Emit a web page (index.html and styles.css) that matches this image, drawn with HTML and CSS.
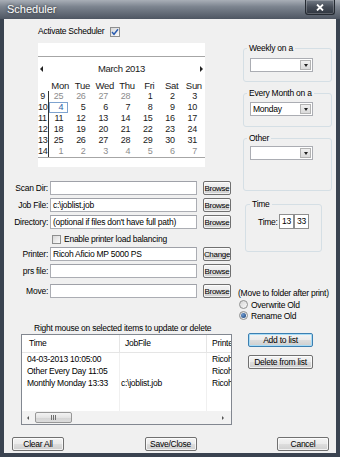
FILE: index.html
```html
<!DOCTYPE html>
<html lang="en">
<head>
  <meta charset="UTF-8" />
  <title>Scheduler</title>
  <link rel="stylesheet" href="styles.css">
</head>
<body>
  <div class="window">
    <div class="titlebar">
      <span class="title">Scheduler</span>
      <span class="close-btn">
        <svg width="8" height="7" viewBox="0 0 8 7"><path d="M1 0.5 L7 6.5 M7 0.5 L1 6.5" stroke="#fff" stroke-width="1.8" /></svg>
      </span>
    </div>

    <div class="client">
      <div class="main">
        <!-- left side: calendar, paths, job list -->
        <div class="left-col">
          <div class="activate">
            Activate Scheduler
            <span class="check">
              <svg width="8" height="8" viewBox="0 0 8 8"><path d="M1 4 L3 6.3 L7 1.2" fill="none" stroke="#2a5cb0" stroke-width="1.4" /></svg>
            </span>
          </div>

          <div class="calendar">
            <div class="cal-top"></div>
            <div class="cal-head">
              <span class="arrow-left"></span>
              <span class="month">March 2013</span>
              <span class="arrow-right"></span>
            </div>
            <div class="cal-grid">
              <span></span><span class="dow">Mon</span><span class="dow">Tue</span><span class="dow">Wed</span><span class="dow">Thu</span><span class="dow">Fri</span><span class="dow">Sat</span><span class="dow">Sun</span>

              <span class="wk">9</span><span class="d gray">25</span><span class="d gray">26</span><span class="d gray">27</span><span class="d gray">28</span><span class="d">1</span><span class="d">2</span><span class="d">3</span>
              <span class="wk">10</span><span class="d sel">4</span><span class="d">5</span><span class="d">6</span><span class="d">7</span><span class="d">8</span><span class="d">9</span><span class="d">10</span>
              <span class="wk">11</span><span class="d">11</span><span class="d">12</span><span class="d">13</span><span class="d">14</span><span class="d">15</span><span class="d">16</span><span class="d">17</span>
              <span class="wk">12</span><span class="d">18</span><span class="d">19</span><span class="d">20</span><span class="d">21</span><span class="d">22</span><span class="d">23</span><span class="d">24</span>
              <span class="wk">13</span><span class="d">25</span><span class="d">26</span><span class="d">27</span><span class="d">28</span><span class="d">29</span><span class="d">30</span><span class="d">31</span>
              <span class="wk">14</span><span class="d gray">1</span><span class="d gray">2</span><span class="d gray">3</span><span class="d gray">4</span><span class="d gray">5</span><span class="d gray">6</span><span class="d gray">7</span>
            </div>
          </div>

          <div class="form">
            <div class="row">
              <span class="lbl">Scan Dir:</span>
              <span class="field"></span>
              <span class="btn small">Browse</span>
            </div>
            <div class="row">
              <span class="lbl">Job File:</span>
              <span class="field">c:\joblist.job</span>
              <span class="btn small">Browse</span>
            </div>
            <div class="row">
              <span class="lbl">Directory:</span>
              <span class="field">(optional if files don't have full path)</span>
              <span class="btn small">Browse</span>
            </div>
            <div class="row cb-row">
              <span class="box"></span>
              <span class="cb-text">Enable printer load balancing</span>
            </div>
            <div class="row">
              <span class="lbl">Printer:</span>
              <span class="field">Ricoh Aficio MP 5000 PS</span>
              <span class="btn small">Change</span>
            </div>
            <div class="row">
              <span class="lbl">prs file:</span>
              <span class="field"></span>
              <span class="btn small">Browse</span>
            </div>
            <div class="row move-row">
              <span class="lbl">Move:</span>
              <span class="field"></span>
              <span class="btn small">Browse</span>
            </div>
          </div>

          <div class="list-label">Right mouse on selected items to update or delete</div>

          <div class="list">
            <div class="list-head">
              <span class="hc c1">Time</span>
              <span class="hc c2">JobFile</span>
              <span class="hc c3">Printe</span>
            </div>
            <div class="list-body">
              <div class="col c1">
                <span class="cell">04-03-2013 10:05:00</span>
                <span class="cell">Other Every Day 11:05</span>
                <span class="cell">Monthly Monday 13:33</span>
              </div>
              <div class="col c2">
                <span class="cell"></span>
                <span class="cell"></span>
                <span class="cell">c:\joblist.job</span>
              </div>
              <div class="col c3">
                <span class="cell">Ricoh</span>
                <span class="cell">Ricoh</span>
                <span class="cell">Ricoh</span>
              </div>
            </div>
            <div class="hscroll">
              <span class="sb-arrow"><span class="tri-left"></span></span>
              <span class="thumb"><span class="grip"></span></span>
              <span class="track"></span>
              <span class="sb-arrow right"><span class="tri-right"></span></span>
            </div>
          </div>
        </div>

        <!-- right side: repeat options, time, move options -->
        <div class="right-col">
          <fieldset class="group g1">
            <legend>Weekly on a</legend>
            <div class="combo"><span class="combo-text"></span><span class="combo-btn"><span class="tri-down"></span></span></div>
          </fieldset>

          <fieldset class="group g2">
            <legend>Every Month on a</legend>
            <div class="combo"><span class="combo-text">Monday</span><span class="combo-btn"><span class="tri-down"></span></span></div>
          </fieldset>

          <fieldset class="group g3">
            <legend>Other</legend>
            <div class="combo"><span class="combo-text"></span><span class="combo-btn"><span class="tri-down"></span></span></div>
          </fieldset>

          <fieldset class="group time-group">
            <legend>Time</legend>
            <div class="time-row">
              <span class="time-lbl">Time:</span>
              <span class="time-box">13</span>
              <span class="time-box">33</span>
            </div>
          </fieldset>

          <div class="move-note">(Move to folder after print)</div>
          <div class="radio-row"><span class="radio"></span>Overwrite Old</div>
          <div class="radio-row"><span class="radio on"></span>Rename Old</div>

          <span class="btn side default">Add to list</span>
          <span class="btn side delete">Delete from list</span>
        </div>
      </div>

      <div class="bottom-bar">
        <span class="btn wide">Clear All</span>
        <span class="btn wide">Save/Close</span>
        <span class="btn wide">Cancel</span>
      </div>
    </div>
  </div>
</body>
</html>
```

FILE: styles.css
```css
* {
  margin: 0;
  padding: 0;
  box-sizing: border-box;
}

body {
  background: #fff;
  font-family: "Liberation Sans", Arial, sans-serif;
  font-size: 8.5px;
  letter-spacing: -0.25px;
  color: #000;
}

.window {
  width: 340px;
  height: 457px;
  display: flex;
  flex-direction: column;
  background: #3a4350;
}

/* Title bar */
.titlebar {
  height: 19px;
  display: flex;
  align-items: flex-start;
  justify-content: space-between;
  background: linear-gradient(to bottom, #a9afb7 0%, #7c848f 35%, #4e5662 100%);
}

.title {
  font-size: 11px;
  letter-spacing: 0;
  line-height: 19px;
  color: #fff;
  padding-left: 7px;
  text-shadow: 0 0 3px rgba(0, 0, 0, 0.7);
}

.close-btn {
  width: 30px;
  height: 15px;
  margin-right: 5px;
  display: flex;
  align-items: center;
  justify-content: center;
  background: linear-gradient(to bottom, #737b86, #454c57 50%, #2f3640);
  border: 1px solid #242a32;
  border-top: 0;
  border-radius: 0 0 3px 3px;
  box-shadow: inset 0 0 0 1px rgba(255, 255, 255, 0.22);
}

.client {
  margin: 0 4px 4px;
  height: 434px;
  background: #f0f0f0;
  display: flex;
  flex-direction: column;
}

.main {
  display: flex;
  height: 406px;
}

.left-col {
  width: 232px;
  display: flex;
  flex-direction: column;
}

.right-col {
  width: 100px;
  display: flex;
  flex-direction: column;
}

/* Activate checkbox */
.activate {
  margin-top: 7px;
  height: 11px;
  line-height: 11px;
  padding-left: 34px;
  display: flex;
  align-items: center;
}

.check,
.box {
  width: 10px;
  height: 10px;
  border: 1px solid #8e8f8f;
  background: linear-gradient(135deg, #d8d8d8, #fbfbfb);
  display: flex;
  align-items: center;
  justify-content: center;
  flex-shrink: 0;
}

.check {
  margin-left: 6px;
}

/* Calendar */
.calendar {
  margin: 6px 0 0 34px;
  width: 167px;
  height: 124px;
  background: #fff;
  font-size: 9px;
  letter-spacing: -0.3px;
  color: #1a1a1a;
}

.cal-top {
  height: 14px;
  border-bottom: 1px solid #a6a6a6;
}

.cal-head {
  height: 23px;
  padding: 0 2px;
  display: flex;
  align-items: center;
  justify-content: space-between;
}

.month {
  font-size: 9.5px;
}

.arrow-left,
.arrow-right {
  width: 0;
  height: 0;
  border-top: 3px solid transparent;
  border-bottom: 3px solid transparent;
}

.arrow-left {
  border-right: 3px solid #222;
}

.arrow-right {
  border-left: 3px solid #222;
}

.cal-grid {
  display: grid;
  grid-template-columns: 11px repeat(7, 1fr);
  grid-auto-rows: 11px;
  line-height: 11px;
  border-bottom: 1px solid #a6a6a6;
}

.dow {
  text-align: center;
  font-size: 9.5px;
}

.wk {
  text-align: right;
  padding-right: 3px;
  border-right: 1px solid #333;
}

.d {
  text-align: right;
  padding-right: 8px;
}

.d.gray {
  color: #8c8c8c;
}

.d.sel {
  margin-right: 3px;
  padding-right: 4px;
  line-height: 9px;
  border: 1px solid #7ea3cf;
  color: #2d5ea6;
}

/* Path fields */
.form {
  margin-top: 14px;
  display: flex;
  flex-direction: column;
}

.row {
  height: 14px;
  margin-bottom: 3px;
  display: flex;
  align-items: center;
}

.lbl {
  width: 44px;
  text-align: right;
  flex-shrink: 0;
  white-space: nowrap;
}

.field {
  margin-left: 2px;
  width: 147px;
  height: 14px;
  line-height: 12px;
  padding-left: 2px;
  border: 1px solid #abadb3;
  border-top-color: #9fa1a8;
  background: #fff;
  white-space: nowrap;
  overflow: hidden;
}

.cb-row {
  margin-bottom: 1px;
  padding-left: 48px;
}

.box {
  width: 9px;
  height: 9px;
}

.cb-text {
  margin-left: 3px;
}

.move-row {
  margin-top: 3px;
}

/* Buttons */
.btn {
  display: flex;
  align-items: center;
  justify-content: center;
  height: 14px;
  border: 1px solid #707070;
  border-radius: 2px;
  background: linear-gradient(to bottom, #f3f3f3 0%, #ebebeb 48%, #dddddd 52%, #cfcfcf 100%);
  box-shadow: inset 0 0 0 1px rgba(255, 255, 255, 0.7);
  white-space: nowrap;
  overflow: hidden;
  flex-shrink: 0;
}

.btn.small {
  margin-left: 6px;
  width: 28px;
  font-size: 8px;
  letter-spacing: -0.3px;
}

.btn.side {
  margin-left: 12px;
  width: 65px;
}

.btn.default {
  margin-top: 12px;
  border-color: #3c7fb1;
  box-shadow: inset 0 0 0 1px #a8dcf6;
}

.btn.delete {
  margin-top: 8px;
}

.btn.wide {
  width: 52px;
}

/* Job list */
.list-label {
  margin-top: 21px;
  padding-left: 30px;
  height: 12px;
  line-height: 12px;
  white-space: nowrap;
}

.list {
  margin-left: 17px;
  width: 211px;
  height: 91px;
  border: 1px solid #828790;
  background: #fff;
  display: flex;
  flex-direction: column;
  overflow: hidden;
}

.list-head {
  height: 18px;
  display: flex;
  border-bottom: 1px solid #e5e5e5;
  flex-shrink: 0;
}

.hc {
  line-height: 16px;
  white-space: nowrap;
  border-right: 1px solid #e5e5e5;
  flex-shrink: 0;
  overflow: hidden;
}

.c1 {
  width: 98px;
}

.c2 {
  width: 87px;
}

.c3 {
  width: 40px;
}

.hc.c1 {
  padding-left: 7px;
}

.hc.c2,
.hc.c3 {
  padding-left: 5px;
}

.list-body {
  flex: 1;
  display: flex;
}

.col {
  display: flex;
  flex-direction: column;
  flex-shrink: 0;
  border-right: 1px solid #f0f0f0;
}

.cell {
  height: 12px;
  line-height: 12px;
  white-space: nowrap;
  overflow: hidden;
}

.col.c1 .cell {
  padding-left: 5px;
}

.col.c2 .cell {
  padding-left: 1px;
}

.col.c3 .cell {
  padding-left: 5px;
}

.hscroll {
  height: 13px;
  display: flex;
  align-items: center;
  background: #f2f2f2;
  flex-shrink: 0;
}

.sb-arrow {
  width: 11px;
  height: 13px;
  display: flex;
  align-items: center;
  justify-content: center;
}

.sb-arrow.right {
  width: 16px;
}

.tri-left,
.tri-right {
  width: 0;
  height: 0;
  border-top: 2px solid transparent;
  border-bottom: 2px solid transparent;
}

.tri-left {
  border-right: 2px solid #555;
}

.tri-right {
  border-left: 2px solid #555;
}

.thumb {
  margin-left: 2px;
  width: 37px;
  height: 11px;
  border: 1px solid #979797;
  border-radius: 2px;
  background: linear-gradient(to bottom, #f3f3f3, #e4e4e4 50%, #d4d4d4 51%, #dcdcdc);
  display: flex;
  align-items: center;
  justify-content: center;
}

.grip {
  width: 5px;
  height: 5px;
  background: repeating-linear-gradient(to right, #6f6f6f 0 1px, transparent 1px 2px);
}

.track {
  flex: 1;
}

/* Group boxes */
.group {
  border: 1px solid #d5dfe5;
  border-radius: 3px;
  margin-left: 7px;
  width: 89px;
  padding: 0;
  min-width: 0;
}

.group legend {
  margin-left: 3px;
  padding: 0 2px;
  line-height: 10px;
  white-space: nowrap;
}

.g1 {
  margin-top: 24px;
  padding-bottom: 9px;
}

.g1 .combo {
  margin-top: 5px;
}

.g2 {
  margin-top: 6px;
  padding-bottom: 10px;
}

.g2 .combo {
  margin-top: 4px;
}

.g3 {
  margin-top: 6px;
  padding-bottom: 30px;
}

.g3 .combo {
  margin-top: 3px;
}

.combo {
  margin-left: 6px;
  width: 63px;
  height: 14px;
  border: 1px solid #abadb3;
  background: #fff;
  display: flex;
}

.combo-text {
  flex: 1;
  padding-left: 2px;
  line-height: 12px;
}

.combo-btn {
  width: 11px;
  margin: 1px;
  border: 1px solid #b3b3b3;
  background: linear-gradient(to bottom, #f0f0f0, #dadada);
  display: flex;
  align-items: center;
  justify-content: center;
}

.tri-down {
  width: 0;
  height: 0;
  border-left: 2.5px solid transparent;
  border-right: 2.5px solid transparent;
  border-top: 3px solid #222;
}

.time-group {
  margin-top: 8px;
  margin-left: 9px;
  width: 77px;
  padding-bottom: 22px;
}

.time-group legend {
  margin-left: 4px;
}

.time-row {
  margin-top: 5px;
  padding-left: 12px;
  height: 15px;
  display: flex;
  align-items: center;
}

.time-lbl {
  width: 21px;
}

.time-box {
  width: 15px;
  height: 15px;
  line-height: 13px;
  text-align: center;
  border: 1px solid #8e8e8e;
  background: #fff;
}

/* Move options */
.move-note {
  margin-top: 36px;
  padding-left: 2px;
  line-height: 11px;
  white-space: nowrap;
}

.radio-row {
  height: 11px;
  padding-left: 3px;
  display: flex;
  align-items: center;
}

.radio {
  width: 9px;
  height: 9px;
  margin-right: 3px;
  border: 1px solid #8e8f8f;
  border-radius: 50%;
  background: linear-gradient(135deg, #d4d4d4, #fbfbfb);
  display: flex;
  align-items: center;
  justify-content: center;
}

.radio.on::after {
  content: "";
  width: 5px;
  height: 5px;
  border-radius: 50%;
  background: radial-gradient(circle at 35% 35%, #6d9bd3, #173d70);
}

/* Bottom buttons */
.bottom-bar {
  margin-top: 12px;
  padding: 0 7px 0 8px;
  display: flex;
  justify-content: space-between;
}
```
